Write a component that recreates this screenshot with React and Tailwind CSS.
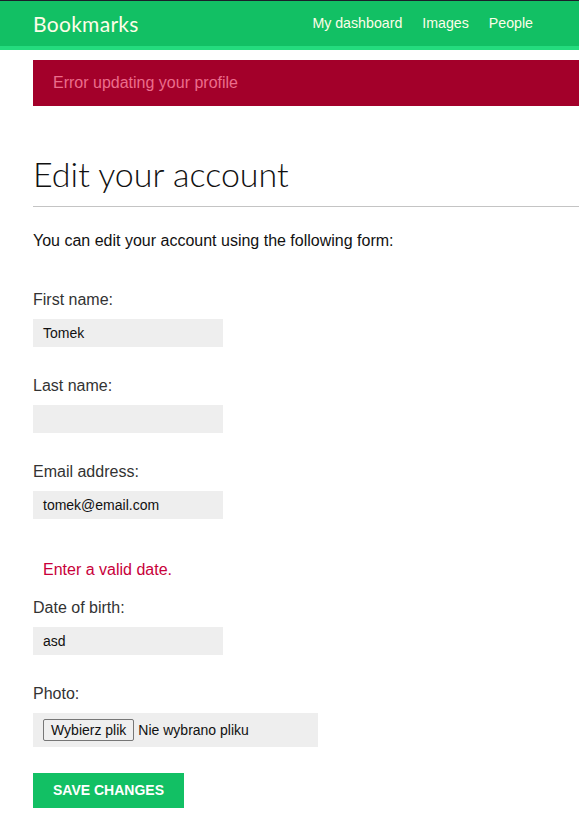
import React from 'react';

const App = () => {
  return (
    <div className="min-h-[831px] bg-white font-['Liberation_Sans',Arial,sans-serif] overflow-hidden">
      <header className="border-t border-[#1b1f2a] bg-[#12c064] border-b-4 border-b-[#24dc7e]">
        <div className="h-[45px] flex items-center justify-between pl-[33px] pr-[46px]">
          <div className="text-[21px] text-[#fdfde8] font-['Lato',sans-serif] tracking-[0.3px]">Bookmarks</div>
          <nav className="flex items-center gap-[20px] text-[14.2px] text-[#fdfde8]">
            <a>My dashboard</a>
            <a>Images</a>
            <a>People</a>
          </nav>
        </div>
      </header>

      <main className="pl-[33px]">
        <div className="mt-[10px] h-[46px] bg-[#a3002a] flex items-center pl-[20px] text-[16px] text-[#ec6d8c]">
          Error updating your profile
        </div>

        <h1 className="mt-[48px] text-[34px] leading-[40px] text-[#111] font-['Lato',sans-serif] font-light pb-[12px] border-b border-[#c4c4c4]">
          Edit your account
        </h1>

        <p className="mt-[24px] text-[16px] leading-[20px] text-[#111]">
          You can edit your account using the following form:
        </p>

        <form>
          <div className="mt-[39px]">
            <label className="block text-[16px] leading-[20px] text-[#333]">First name:</label>
            <div className="mt-[9px] h-[28px] w-[190px] bg-[#eeeeee] px-[10px] flex items-center text-[14px] text-[#111]">Tomek</div>
          </div>
          <div className="mt-[29px]">
            <label className="block text-[16px] leading-[20px] text-[#333]">Last name:</label>
            <div className="mt-[9px] h-[28px] w-[190px] bg-[#eeeeee]"></div>
          </div>
          <div className="mt-[29px]">
            <label className="block text-[16px] leading-[20px] text-[#333]">Email address:</label>
            <div className="mt-[9px] h-[28px] w-[190px] bg-[#eeeeee] px-[10px] flex items-center text-[14px] text-[#111]">tomek@email.com</div>
          </div>

          <div className="mt-[41px] pl-[10px] text-[16px] leading-[20px] text-[#c8003a]">Enter a valid date.</div>

          <div className="mt-[18px]">
            <label className="block text-[16px] leading-[20px] text-[#333]">Date of birth:</label>
            <div className="mt-[9px] h-[28px] w-[190px] bg-[#eeeeee] px-[10px] flex items-center text-[14px] text-[#111]">asd</div>
          </div>

          <div className="mt-[29px]">
            <label className="block text-[16px] leading-[20px] text-[#333]">Photo:</label>
            <div className="mt-[9px] h-[34px] w-[285px] bg-[#eeeeee] pl-[10px] flex items-center gap-[4px] text-[14px] text-[#111]">
              <span className="h-[22px] px-[7px] flex items-center bg-[#efefef] border border-[#767676] rounded-[2px] text-[14px] text-[#111]">Wybierz plik</span>
              <span>Nie wybrano pliku</span>
            </div>
          </div>

          <button type="button" className="mt-[26px] h-[35px] w-[151px] bg-[#12c064] text-white text-[14px] font-bold uppercase">
            Save changes
          </button>
        </form>
      </main>
    </div>
  );
};

export default App;
